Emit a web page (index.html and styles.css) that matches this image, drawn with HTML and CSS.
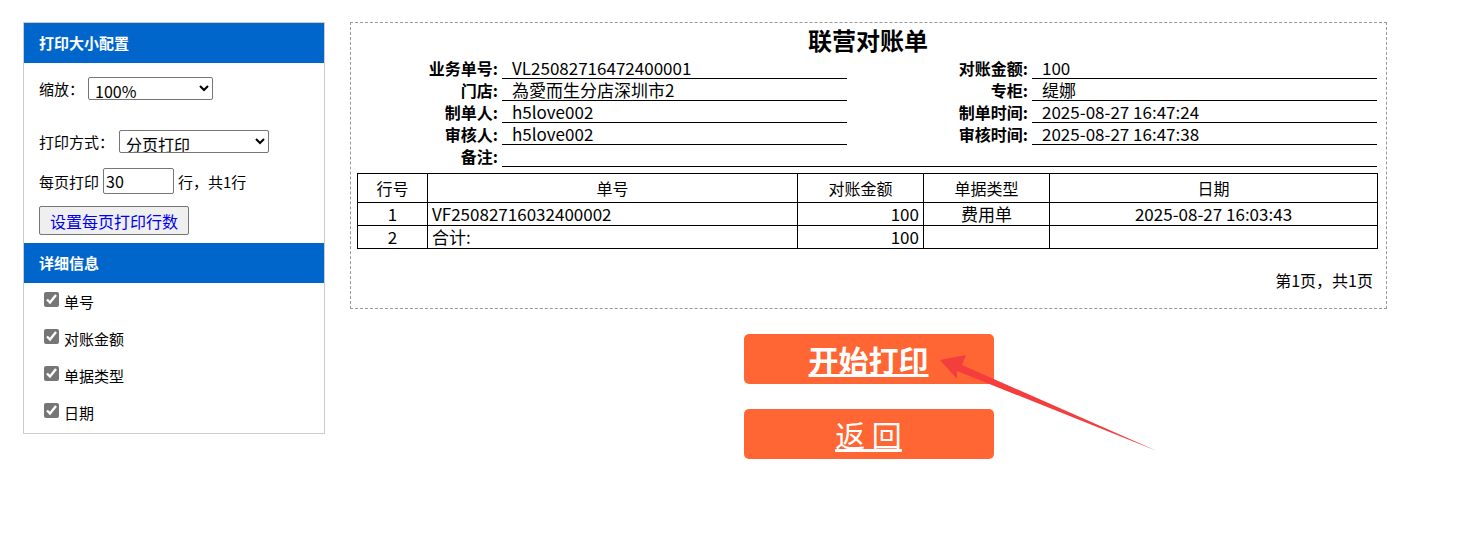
FILE: index.html
```html
<!DOCTYPE html>
<html>
  <head>
    <meta charset="UTF-8" />
    <title>联营对账单</title>
    <link rel="stylesheet" href="styles.css">
  </head>

  <body>
    <div class="page">
      <div class="side">
        <div class="side-head">打印大小配置</div>
        <div class="side-body">
          <div class="opt opt-zoom">
            <label for="zoom">缩放：</label>
            <select id="zoom" class="sel-zoom">
              <option>100%</option>
            </select>
          </div>
          <div class="opt opt-mode">
            <label for="mode">打印方式：</label>
            <select id="mode" class="sel-mode">
              <option>分页打印</option>
            </select>
          </div>
          <div class="opt opt-rows">
            <span>每页打印</span>
            <input type="text" class="rows" value="30" />
            <span>行，共1行</span>
          </div>
          <div class="opt opt-btn">
            <button type="button" class="btn-rows">设置每页打印行数</button>
          </div>
        </div>
        <div class="side-head">详细信息</div>
        <ul class="fields">
          <li><input type="checkbox" checked /><span>单号</span></li>
          <li><input type="checkbox" checked /><span>对账金额</span></li>
          <li><input type="checkbox" checked /><span>单据类型</span></li>
          <li><input type="checkbox" checked /><span>日期</span></li>
        </ul>
      </div>

      <div class="main">
        <div class="sheet">
          <h1>联营对账单</h1>
          <div class="info">
            <span class="k">业务单号:</span><span class="v">VL25082716472400001</span>
            <span class="k">对账金额:</span><span class="v">100</span>
            <span class="k">门店:</span><span class="v">為愛而生分店深圳市2</span>
            <span class="k">专柜:</span><span class="v">缇娜</span>
            <span class="k">制单人:</span><span class="v">h5love002</span>
            <span class="k">制单时间:</span><span class="v">2025-08-27 16:47:24</span>
            <span class="k">审核人:</span><span class="v">h5love002</span>
            <span class="k">审核时间:</span><span class="v">2025-08-27 16:47:38</span>
            <span class="k">备注:</span><span class="v v-wide"></span>
          </div>
          <table class="list">
            <tr>
              <th class="c-no">行号</th>
              <th class="c-code">单号</th>
              <th class="c-amt">对账金额</th>
              <th class="c-type">单据类型</th>
              <th>日期</th>
            </tr>
            <tr>
              <td class="center">1</td>
              <td>VF25082716032400002</td>
              <td class="right">100</td>
              <td class="center">费用单</td>
              <td class="center">2025-08-27 16:03:43</td>
            </tr>
            <tr>
              <td class="center">2</td>
              <td>合计:</td>
              <td class="right">100</td>
              <td></td>
              <td></td>
            </tr>
          </table>
          <div class="pager">第1页，共1页</div>
        </div>

        <div class="actions">
          <a href="#" class="act act-print">开始打印</a>
          <a href="#" class="act act-back">返 回</a>
        </div>
      </div>
    </div>

    <svg class="arrow" width="1460" height="542" viewBox="0 0 1460 542">
      <polygon points="940,360 966,355 962,365 1157,451 957,371 957,379" fill="#f43d3d" />
    </svg>
  </body>
</html>
```

FILE: styles.css
```css
body {
  margin: 0;
  padding: 22px 23px;
  font-family: "Noto Sans CJK SC", "Microsoft YaHei", sans-serif;
  color: #000;
}

.page {
  display: flex;
  align-items: flex-start;
  gap: 25px;
}

.side {
  width: 300px;
  border: 1px solid #ccc;
  font-size: 15px;
}

.side-head {
  height: 40px;
  line-height: 40px;
  padding-left: 15px;
  background: #0066cc;
  color: #fff;
  font-weight: bold;
}

.side-body {
  padding: 14px 15px 8px;
}

.opt {
  display: flex;
  align-items: center;
}

.opt-mode {
  margin-top: 30px;
}

.opt-rows {
  margin-top: 15px;
}

.opt-btn {
  margin-top: 12px;
}

select {
  font: 16px "Noto Sans CJK SC", sans-serif;
  height: 23px;
  padding: 0 2px;
  border: 1px solid #767676;
  border-radius: 2px;
  background: #fff;
}

.sel-zoom {
  width: 125px;
  margin-left: 4px;
}

.sel-mode {
  width: 150px;
  margin-left: 5px;
}

.rows {
  width: 71px;
  height: 26px;
  box-sizing: border-box;
  margin: 0 4px;
  padding: 0 2px;
  font: 16px "Noto Sans CJK SC", sans-serif;
  border: 1px solid #767676;
  border-radius: 2px;
}

.btn-rows {
  height: 29px;
  padding: 0 10px;
  font: 16px "Noto Sans CJK SC", sans-serif;
  color: #0000ee;
  background: #efefef;
  border: 1px solid #767676;
  border-radius: 2px;
}

.fields {
  list-style: none;
  margin: 0;
  padding: 0 0 2px 20px;
}

.fields li {
  display: flex;
  align-items: center;
  height: 37px;
}

.fields input {
  margin: 0 5px 5px 0;
  width: 15px;
  height: 15px;
  accent-color: #767676;
}

.main {
  width: 1037px;
}

.sheet {
  border: 1px dashed #999;
  padding: 0 7px 16px 6px;
}

h1 {
  margin: 0;
  text-align: center;
  font-size: 24px;
  line-height: 34px;
}

.info {
  display: grid;
  grid-template-columns: 141px 345px 177px 345px;
  column-gap: 4px;
  font-size: 16px;
  line-height: 21px;
  margin-bottom: 6px;
}

.info .k {
  text-align: right;
  font-weight: bold;
  padding-top: 1px;
  height: 21px;
}

.info .v {
  border-bottom: 1px solid #000;
  padding-left: 10px;
  height: 21px;
  font-size: 17px;
  line-height: 21px;
}

.info .v-wide {
  grid-column: 2 / 5;
}

.list {
  width: 1021px;
  border-collapse: collapse;
  font-size: 17px;
}

.list th,
.list td {
  border: 1px solid #000;
  padding: 0 4px;
  height: 22px;
  line-height: 20px;
}

.list th {
  font-weight: normal;
  font-size: 16px;
  height: 28px;
}

.c-no {
  width: 61px;
}

.c-code {
  width: 361px;
}

.c-amt,
.c-type {
  width: 117px;
}

.center {
  text-align: center;
}

.right {
  text-align: right;
}

.pager {
  text-align: right;
  font-size: 16px;
  padding: 19px 6px 0 0;
  line-height: 24px;
}

.actions {
  display: flex;
  flex-direction: column;
  align-items: center;
  gap: 25px;
  margin-top: 25px;
}

.act {
  display: block;
  width: 250px;
  height: 50px;
  line-height: 50px;
  text-align: center;
  background: #ff6633;
  border-radius: 5px;
  color: #fff;
  font-size: 30px;
  text-decoration: underline;
}

.act-print {
  font-weight: bold;
}

.arrow {
  position: absolute;
  left: 0;
  top: 0;
  pointer-events: none;
}
```
